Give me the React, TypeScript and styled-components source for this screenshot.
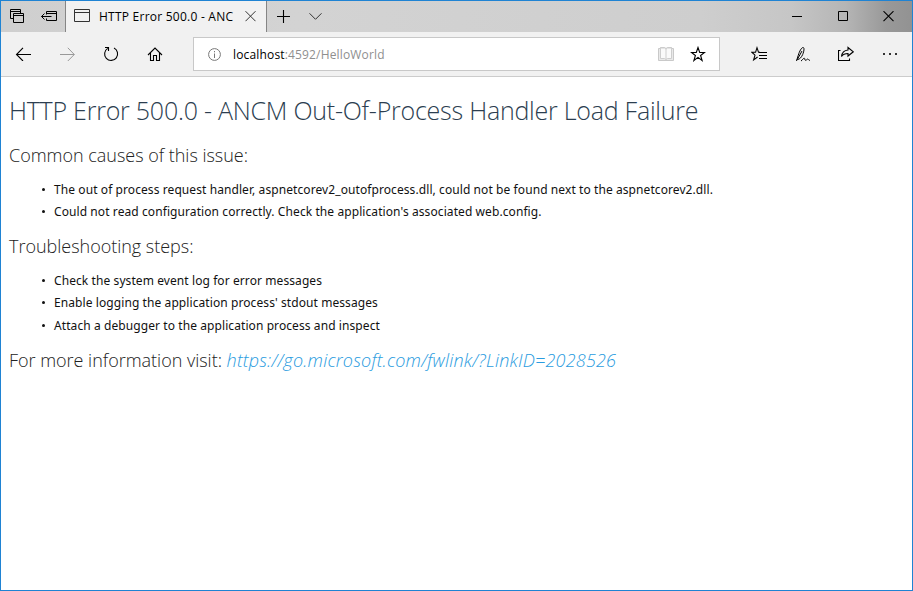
import React from "react";
import styled, { createGlobalStyle } from "styled-components";

const GlobalStyle = createGlobalStyle`
  * { box-sizing: border-box; }
  body { margin: 0; background: #fff; overflow: hidden; }
  button { font: inherit; }
`;

const Window = styled.div`
  width: 913px;
  height: 591px;
  border: 1px solid #1f83d3;
  background: #fff;
  display: flex;
  flex-direction: column;
  font-family: "Open Sans", "Noto Sans", sans-serif;
  color: #000;
`;

const TitleBar = styled.header`
  height: 31px;
  flex: none;
  display: flex;
  background: linear-gradient(90deg, #cfcfcf 0, #d3d3d3 300px, #cecece 700px, #c6c6c6 790px, #b5b5b5 845px, #999 885px, #929292 100%);
`;

const TabActions = styled.div`
  width: 65px;
  display: flex;
  border-right: 1px solid #858585;
`;

const IconButton = styled.button<{ $w: number }>`
  width: ${(p) => p.$w}px;
  flex: none;
  padding: 0;
  border: 0;
  background: transparent;
  color: inherit;
  display: flex;
  align-items: center;
  justify-content: center;
`;

const Icon = styled.svg`
  display: block;
  flex: none;
  fill: none;
  stroke: currentColor;
  stroke-width: 1;
`;

const Tab = styled.div`
  width: 201px;
  display: flex;
  align-items: center;
  padding-left: 7px;
  background: #f1f1f1;
  border-right: 1px solid #858585;
`;

const TabTitle = styled.span`
  width: 139px;
  margin-left: 8px;
  overflow: hidden;
  white-space: nowrap;
  font-size: 12px;
  line-height: 18px;
  letter-spacing: 0.24px;
`;

const Spacer = styled.div`
  flex: 1;
`;

const Toolbar = styled.nav`
  height: 45px;
  flex: none;
  display: flex;
  align-items: stretch;
  background: #f1f1f1;
  border-bottom: 1px solid #ccc;
`;

const Address = styled.div`
  width: 527px;
  height: 34px;
  margin: 5px 16px 0 16px;
  padding: 0 5px 0 14px;
  display: flex;
  align-items: center;
  background: #fff;
  border: 1px solid #c8c8c8;
`;

const Url = styled.span`
  flex: 1;
  margin-left: 12px;
  padding-top: 2px;
  font-size: 12px;
  line-height: 18px;
  letter-spacing: 0.16px;
  color: #8f8f8f;
  b { font-weight: 400; color: #000; }
`;

const Page = styled.main`
  flex: 1;
  padding: 0 8px;
`;

const Title = styled.h1`
  margin: 15px 0 0;
  font-size: 25px;
  font-weight: 300;
  line-height: 36px;
  white-space: nowrap;
  color: #2c3e50;
  letter-spacing: -0.24px;
`;

const Subtitle = styled.h2<{ $top?: number }>`
  margin: ${(p) => p.$top ?? 10}px 0 0;
  font-size: 18px;
  font-weight: 300;
  line-height: 26px;
  white-space: nowrap;
  color: #222;
  letter-spacing: -0.02px;
`;

const List = styled.ul`
  margin: 10px 0 0;
  padding: 0 0 0 32px;
  list-style: none;
`;

const Item = styled.li`
  display: flex;
  align-items: center;
  height: 22.5px;
  font-family: "Noto Sans", "Open Sans", sans-serif;
  font-size: 12px;
  white-space: nowrap;
  color: #111;
  letter-spacing: 0.085px;
  &::before {
    content: "";
    width: 3px;
    height: 3px;
    margin: 0 9px 0 1px;
    border-radius: 50%;
    background: #111;
  }
`;

const Link = styled.a`
  color: #2a9ce0;
  font-style: italic;
  text-decoration: none;
  letter-spacing: 0.2px;
`;

export default function App() {
  return (
    <>
      <GlobalStyle />
      <Window>
        <TitleBar>
          <TabActions>
            <IconButton $w={32} aria-label="Tabs set aside">
              <Icon width="16" height="15" viewBox="0 0 16 15">
                <path d="M4.500 9.500h-3v-9h10v4M1.500 2.500h10" />
                <path d="M4.500 4.500h10v9h-10zM4.500 6.500h10" />
              </Icon>
            </IconButton>
            <IconButton $w={32} aria-label="Set tabs aside">
              <Icon width="18" height="15" viewBox="0 0 18 15">
                <path d="M6.500 5.500v-3h10v9h-10v-2M6.500 4.500h10M1.500 7.500h10M4.500 4.500l-3 3 3 3" />
              </Icon>
            </IconButton>
          </TabActions>
          <Tab>
            <Icon width="18" height="15" viewBox="0 0 18 15"><path d="M1.500.5h15v12h-15zM1.500 3.500h15" stroke="#333" /></Icon>
            <TabTitle>HTTP Error 500.0 - ANC</TabTitle>
            <IconButton $w={24} aria-label="Close tab">
              <Icon width="11" height="11" viewBox="0 0 11 11"><path d="M.5.2l10 10M10.500.2l-10 10" stroke="#333" /></Icon>
            </IconButton>
          </Tab>
          <IconButton $w={33} aria-label="New tab">
            <Icon width="13" height="13" viewBox="0 0 13 13"><path d="M0 6.500h13M6.500 0v13" strokeWidth="1.1" /></Icon>
          </IconButton>
          <IconButton $w={32} aria-label="Tab previews">
            <Icon width="14" height="7" viewBox="0 0 14 7"><path d="M.5.3L6.500 6.300 12.500.3" stroke="#333" /></Icon>
          </IconButton>
          <Spacer />
          <IconButton $w={46} aria-label="Minimize">
            <Icon width="10" height="11" viewBox="0 0 10 11"><path d="M0 5.500h10" /></Icon>
          </IconButton>
          <IconButton $w={46} aria-label="Maximize">
            <Icon width="10" height="11" viewBox="0 0 10 11"><path d="M.5.5h9v9h-9z" /></Icon>
          </IconButton>
          <IconButton $w={46} aria-label="Close">
            <Icon width="12" height="11" viewBox="0 0 12 11"><path d="M.5.200l10 10M10.500.200l-10 10" strokeWidth="1.1" /></Icon>
          </IconButton>
        </TitleBar>
        <Toolbar>
          <IconButton $w={44} aria-label="Back">
            <Icon width="16" height="14" viewBox="0 0 16 14"><path d="M16 7.500H1.500M8 .8L1.500 7.500 8 14" strokeWidth="1.1" /></Icon>
          </IconButton>
          <IconButton $w={44} aria-label="Forward">
            <Icon width="16" height="14" viewBox="0 0 16 14"><path d="M1 7.500H15.200M8.800.8l6.500 6.700L8.800 14" stroke="#999" /></Icon>
          </IconButton>
          <IconButton $w={44} aria-label="Refresh">
            <Icon width="16" height="16" viewBox="0 0 16 16"><path d="M4.700 2.400A6.500 6.500 0 1 0 11 2.100M2 1.500h3.500v3.500" strokeWidth="1.1" /></Icon>
          </IconButton>
          <IconButton $w={44} aria-label="Home">
            <Icon width="16" height="16" viewBox="0 0 16 16"><path d="M1 9l7-7 7 7M3.500 7v7.500h3v-5h3v5h3V7" strokeWidth="1.100" /></Icon>
          </IconButton>
          <Address>
            <Icon width="13" height="13" viewBox="0 0 13 13">
              <circle cx="6.500" cy="6.500" r="5.900" stroke="#777" /><path d="M6.500 5.500v4.500M6.500 3v1.300" stroke="#777" />
            </Icon>
            <Url><b>localhost</b>:4592/HelloWorld</Url>
            <IconButton $w={32} aria-label="Reading view">
              <Icon width="16" height="16" viewBox="0 0 16 16">
                <path d="M.5 2.500h2v-1h4l1.500 1 1.500-1h4v1h2v12H.5z" fill="#e9e9e9" stroke="#c9c9c9" />
                <path d="M2.500 2v10.500h4l1.500 1 1.500-1h4V2h-4L8 3 6.500 2zM8 2.500v11" fill="#fafafa" stroke="#cecece" />
              </Icon>
            </IconButton>
            <IconButton $w={32} aria-label="Add to favorites">
              <Icon width="16" height="16" viewBox="0 0 16 16">
                <path d="M8 1.500l1.700 5h4.800l-3.900 3 1.500 5L8 11.400l-4.100 3.100 1.500-5-3.900-3h4.800z" strokeWidth="1.100" />
              </Icon>
            </IconButton>
          </Address>
          <IconButton $w={46} aria-label="Favorites hub">
            <Icon width="16" height="16" viewBox="0 0 16 16">
              <path d="M9 6.200H7.500L6 1.700 4.600 6.200H.8l3.200 3-1.400 4.800 4-3" strokeWidth="1.050" />
              <path d="M8 6.500h8M8 9.500h8M8 12.500h8" strokeWidth="1.100" />
            </Icon>
          </IconButton>
          <IconButton $w={42} aria-label="Add notes">
            <Icon width="16" height="16" viewBox="0 0 16 16">
              <path d="M1.500 15l1.700-5.500C4.500 5 6.500 1.600 8 1.500c1.700 0 1 3.800-.3 7-1.200 2.800-3 4.700-4.900 5M2 14l5-9M6 15c1.600-.8 2.200-3 3.300-2.800.9.200 0 2.100 1.300 2.100 1 0 1.300-1.400 2.200-1.200.8.200.9 1.400 2.200 1.200" />
            </Icon>
          </IconButton>
          <IconButton $w={44} aria-label="Share">
            <Icon width="16" height="16" viewBox="0 0 16 16">
              <path d="M2.500 4.500h-2v10h11v-2" strokeWidth="1.100" />
              <path d="M10 1.500l5.300 4.300L10 10V7.500c-3 0-5 .8-6.500 3C4 6.500 6.500 4.300 10 4z" strokeWidth="1.100" />
            </Icon>
          </IconButton>
          <IconButton $w={44} aria-label="More">
            <Icon width="16" height="4" viewBox="0 0 16 4"><path d="M1 2h2M7 2h2M13 2h2" strokeWidth="2" stroke="#333" /></Icon>
          </IconButton>
        </Toolbar>
        <Page>
          <Title>HTTP Error 500.0 - ANCM Out-Of-Process Handler Load Failure</Title>
          <Subtitle $top={14}>Common causes of this issue:</Subtitle>
          <List>
            <Item>The out of process request handler, aspnetcorev2_outofprocess.dll, could not be found next to the aspnetcorev2.dll.</Item>
            <Item>Could not read configuration correctly. Check the application's associated web.config.</Item>
          </List>
          <Subtitle>Troubleshooting steps:</Subtitle>
          <List>
            <Item>Check the system event log for error messages</Item>
            <Item>Enable logging the application process' stdout messages</Item>
            <Item>Attach a debugger to the application process and inspect</Item>
          </List>
          <Subtitle>For more information visit: <Link>https://go.microsoft.com/fwlink/?LinkID=2028526</Link></Subtitle>
        </Page>
      </Window>
    </>
  );
}
